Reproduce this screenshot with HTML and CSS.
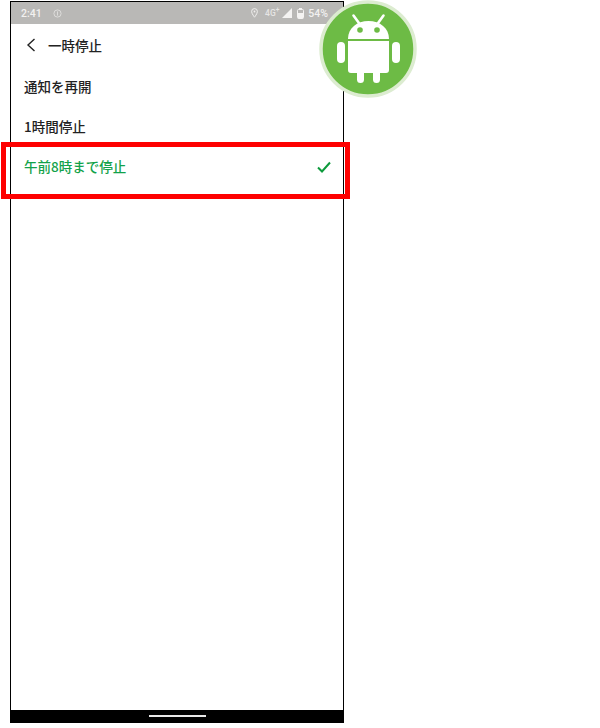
FILE: index.html
```html
<!DOCTYPE html>
<html lang="ja">
<head>
  <meta charset="UTF-8">
  <meta name="viewport" content="width=device-width, initial-scale=1.0">
  <title>一時停止</title>
  <link rel="stylesheet" href="styles.css">
</head>
<body>
  <div class="stage">
    <div class="phone">
      <div class="status-bar">
        <div class="status-left">
          <span class="clock">2:41</span>
          <svg class="info-icon" width="9" height="9" viewBox="0 0 9 9">
            <circle cx="4.500" cy="4.500" r="3.600" fill="none" stroke="#dddcdb" stroke-width="1"/>
            <rect x="4" y="2.400" width="1" height="4.200" fill="#dddcdb"/>
          </svg>
        </div>
        <div class="status-right">
          <svg class="pin-icon" width="7" height="10" viewBox="0 0 7 10">
            <path d="M3.500 .6A2.900 2.900 0 0 0 .6 3.500C.6 5.600 3.500 9.200 3.500 9.200S6.400 5.600 6.400 3.500A2.900 2.900 0 0 0 3.500 .6z" fill="none" stroke="#f0efee" stroke-width="1"/>
            <circle cx="3.500" cy="3.500" r=".9" fill="#f0efee"/>
          </svg>
          <span class="net">4G<sup>+</sup></span>
          <svg class="signal-icon" width="10" height="10" viewBox="0 0 10 10">
            <path d="M0 10L10 0v10z" fill="#f4f3f2"/>
          </svg>
          <svg class="battery-icon" width="7" height="11" viewBox="0 0 7 11">
            <rect x="2" y="0" width="3" height="1.500" fill="#f4f3f2"/>
            <rect x=".5" y="1.500" width="6" height="9" rx="1" fill="none" stroke="#f4f3f2"/>
            <rect x="1" y="5" width="5" height="5.500" fill="#f4f3f2"/>
          </svg>
          <span class="battery">54%</span>
        </div>
      </div>

      <header class="title-bar">
        <svg class="back" width="10" height="14" viewBox="0 0 10 14">
          <path d="M8.500 1L2 7l6.500 6" fill="none" stroke="#222" stroke-width="1.400"/>
        </svg>
        <h1>一時停止</h1>
      </header>

      <ul class="menu">
        <li class="menu-item">通知を再開</li>
        <li class="menu-item">1時間停止</li>
        <li class="menu-item selected">
          午前8時まで停止
          <svg class="check" width="14" height="12" viewBox="0 0 14 12">
            <path d="M1 6.500l4 4L13 1.500" fill="none" stroke="#0d9a3c" stroke-width="2"/>
          </svg>
        </li>
      </ul>

      <div class="spacer"></div>

      <div class="nav-bar"><span class="home-pill"></span></div>
    </div>

    <div class="highlight"></div>

    <div class="android-badge">
      <svg width="98" height="98" viewBox="0 0 98 98">
        <circle cx="49" cy="49" r="47" fill="#6dbb45" stroke="#dcecd0" stroke-width="3.500"/>
        <path d="M34.500 15.500l6.500 9M64.500 15.500l-6.500 9" stroke="#fff" stroke-width="2.600" stroke-linecap="round"/>
        <path d="M29 39c0-11 9-18 20.500-18S70 28 70 39z" fill="#fff"/>
        <circle cx="41" cy="30" r="2.800" fill="#6dbb45"/>
        <circle cx="58" cy="30" r="2.800" fill="#6dbb45"/>
        <path d="M29 41h41v29a3 3 0 0 1-3 3h-6v6.500a3.500 3.500 0 0 1-7 0V73h-9v6.500a3.500 3.500 0 0 1-7 0V73h-6a3 3 0 0 1-3-3z" fill="#fff"/>
        <rect x="18" y="42" width="8" height="21" rx="4" fill="#fff"/>
        <rect x="73" y="42" width="8" height="21" rx="4" fill="#fff"/>
      </svg>
    </div>
  </div>
</body>
</html>
```

FILE: styles.css
```css
body {
  margin: 0;
  background: #fff;
  font-family: "Noto Sans CJK JP", "Noto Sans", sans-serif;
  color: #222;
}

.stage {
  position: relative;
  width: 600px;
  height: 728px;
  padding: 1px 0 0 10px;
  box-sizing: border-box;
}

.phone {
  width: 334px;
  height: 722px;
  box-sizing: border-box;
  border: 1px solid #000;
  border-bottom: none;
  display: flex;
  flex-direction: column;
}

.status-bar {
  height: 22px;
  background: #b9b8b6;
  display: flex;
  align-items: center;
  justify-content: space-between;
  padding: 0 15px 0 10px;
  color: #f2f1f0;
  font-family: "Roboto", sans-serif;
  font-size: 10px;
  font-weight: 500;
}

.status-left,
.status-right {
  display: flex;
  align-items: center;
}

.clock {
  font-size: 10.500px;
  margin-right: 11px;
}

.net {
  font-size: 8.500px;
  margin: 0 3px 0 7px;
  color: #e6e5e4;
}

.net sup {
  font-size: 6.500px;
  line-height: 0;
}

.battery-icon {
  margin: 0 4px 0 5px;
}

.battery {
  font-size: 10.500px;
}

.title-bar {
  height: 42px;
  display: flex;
  align-items: center;
  padding-left: 15px;
  flex-shrink: 0;
}

.title-bar h1 {
  margin: 0 0 0 12px;
  font-size: 13.500px;
  font-weight: 500;
}

.menu {
  list-style: none;
  margin: 0;
  padding: 0;
}

.menu-item {
  height: 40px;
  display: flex;
  align-items: center;
  justify-content: space-between;
  padding: 0 12px 0 13px;
  font-size: 13.500px;
  font-weight: 500;
}

.selected {
  color: #12a24a;
}

.check {
  margin-top: 2px;
}

.spacer {
  flex: 1;
}

.nav-bar {
  height: 13px;
  margin: 0 -1px;
  background: #000;
  display: flex;
  justify-content: center;
  padding-top: 5px;
  box-sizing: border-box;
}

.home-pill {
  width: 57px;
  height: 2px;
  background: #e8e8e8;
}

.highlight {
  position: absolute;
  left: 1px;
  top: 142px;
  width: 349px;
  height: 57px;
  box-sizing: border-box;
  border: 5px solid #fe0000;
}

.android-badge {
  position: absolute;
  left: 319px;
  top: 0;
  line-height: 0;
}
```
